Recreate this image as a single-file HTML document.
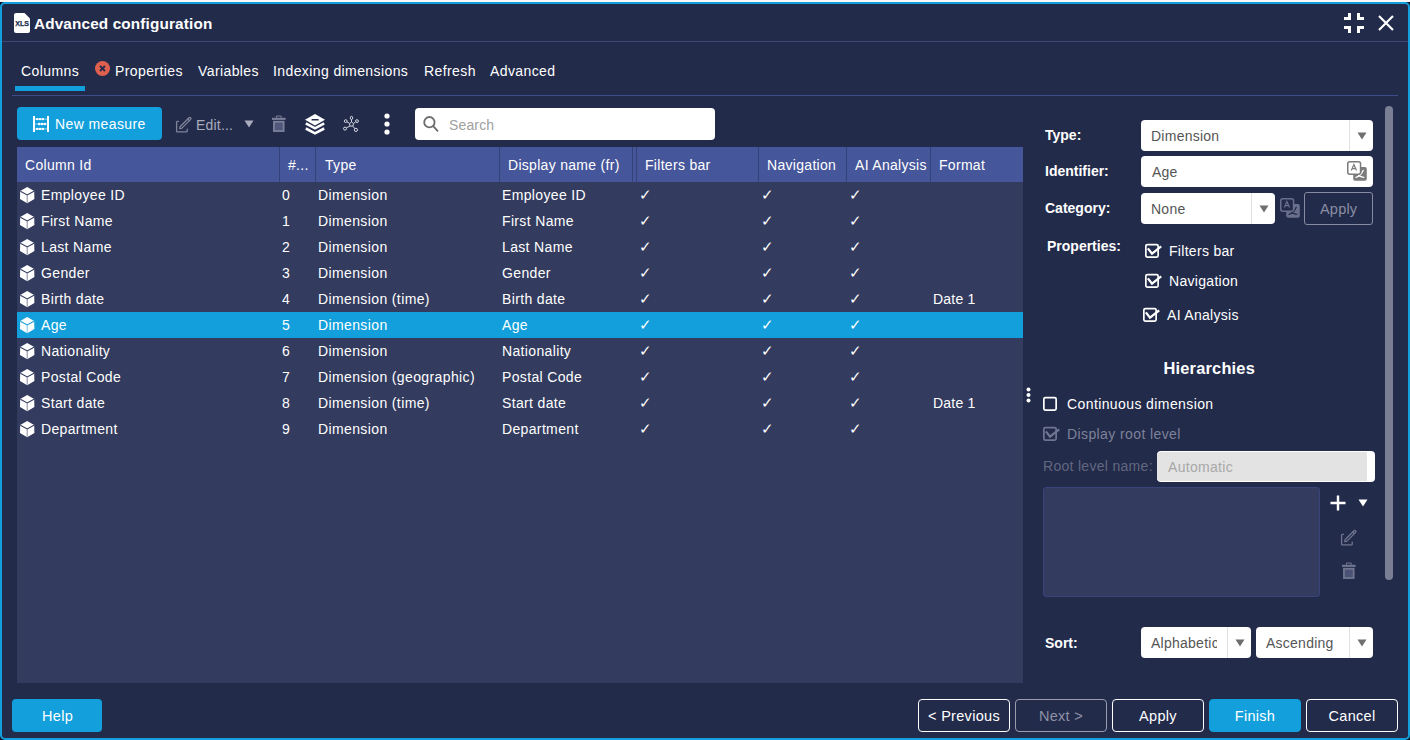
<!DOCTYPE html>
<html><head><meta charset="utf-8">
<style>
*{box-sizing:border-box;margin:0;padding:0}
html,body{width:1410px;height:740px;overflow:hidden;background:#0d1626;font-family:"Liberation Sans",sans-serif;color:#fff}
.abs{position:absolute}
.t{position:absolute;white-space:nowrap;line-height:1}
svg{position:absolute;overflow:visible}
</style></head>
<body>

<div class="abs" style="left:0;top:0;width:1410px;height:2px;background:#fbf8f6"></div>
<div class="abs" style="left:0;top:2px;width:1410px;height:738px;background:#232b4b;border:2px solid #129fdb;border-radius:5px"></div>
<svg style="left:14px;top:13px" width="16" height="20" viewBox="0 0 16 20"><path d="M2 0H10.5L16 5.5V18A2 2 0 0 1 14 20H2A2 2 0 0 1 0 18V2A2 2 0 0 1 2 0Z" fill="#fff"/><text x="1.3" y="13.3" textLength="13.6" lengthAdjust="spacingAndGlyphs" font-family="Liberation Sans" font-weight="bold" font-size="6.8" fill="#232b4b" stroke="#232b4b" stroke-width="0.25">XLS</text></svg>
<div class="t" style="left:34px;top:16.05px;font-size:15.3px;color:#fff;font-weight:bold;letter-spacing:0.15px;">Advanced configuration</div>
<svg style="left:1344px;top:13px" width="20" height="20" viewBox="0 0 20 20" fill="#fff">
<rect x="4" y="0" width="3" height="7"/><rect x="0" y="4" width="7" height="3"/>
<rect x="13" y="0" width="3" height="7"/><rect x="13" y="4" width="7" height="3"/>
<rect x="0" y="13" width="7" height="3"/><rect x="4" y="13" width="3" height="7"/>
<rect x="13" y="13" width="7" height="3"/><rect x="13" y="13" width="3" height="7"/></svg>
<svg style="left:1378px;top:15px" width="16" height="16" viewBox="0 0 16 16"><path d="M1 1L15 15M15 1L1 15" stroke="#fff" stroke-width="2.2"/></svg>
<div class="abs" style="left:2px;top:41px;width:1406px;height:1px;background:#3b4677;"></div>
<div class="t" style="left:21px;top:64.15px;font-size:14px;color:#fff;font-weight:normal;letter-spacing:0.4px;">Columns</div>
<div class="t" style="left:115px;top:64.15px;font-size:14px;color:#fff;font-weight:normal;letter-spacing:0.4px;">Properties</div>
<div class="t" style="left:198px;top:64.15px;font-size:14px;color:#fff;font-weight:normal;letter-spacing:0.4px;">Variables</div>
<div class="t" style="left:273px;top:64.15px;font-size:14px;color:#fff;font-weight:normal;letter-spacing:0.4px;">Indexing dimensions</div>
<div class="t" style="left:424px;top:64.15px;font-size:14px;color:#fff;font-weight:normal;letter-spacing:0.4px;">Refresh</div>
<div class="t" style="left:490px;top:64.15px;font-size:14px;color:#fff;font-weight:normal;letter-spacing:0.4px;">Advanced</div>
<div class="abs" style="left:15px;top:86px;width:70px;height:5px;background:#129fdb;"></div>
<div class="abs" style="left:12px;top:95px;width:1386px;height:1px;background:#3e4c8a;"></div>
<svg style="left:95px;top:61px" width="15" height="15" viewBox="0 0 15 15"><circle cx="7.5" cy="7.5" r="7.5" fill="#e0604f"/><path d="M5 5L10 10M10 5L5 10" stroke="#232b4b" stroke-width="1.8"/></svg>
<div class="abs" style="left:17px;top:107px;width:145px;height:33px;background:#129fdb;border-radius:4px"></div>
<div class="t" style="left:55px;top:117.15px;font-size:14px;color:#fff;font-weight:normal;letter-spacing:0.4px;">New measure</div>
<svg style="left:33px;top:116px" width="16" height="16" viewBox="0 0 16 16" fill="#fff">
<rect x="0" y="0" width="2" height="16"/><rect x="14" y="0" width="2" height="16"/>
<rect x="2" y="2.7" width="12" height="0.8" opacity="0.7"/><rect x="2" y="7.6" width="12" height="0.8" opacity="0.7"/><rect x="2" y="12.5" width="12" height="0.8" opacity="0.7"/>
<ellipse cx="4.2" cy="3.1" rx="1.3" ry="1.2"/><ellipse cx="7" cy="3.1" rx="1.3" ry="1.2"/><ellipse cx="9.8" cy="3.1" rx="1.3" ry="1.2"/>
<ellipse cx="6.2" cy="8" rx="1.3" ry="1.2"/><ellipse cx="9" cy="8" rx="1.3" ry="1.2"/><ellipse cx="11.8" cy="8" rx="1.3" ry="1.2"/>
<ellipse cx="4.2" cy="12.9" rx="1.3" ry="1.2"/><ellipse cx="7" cy="12.9" rx="1.3" ry="1.2"/><ellipse cx="9.8" cy="12.9" rx="1.3" ry="1.2"/></svg>
<svg style="left:176px;top:116px" width="16" height="16" viewBox="0 0 16 16" fill="none" stroke="#7f8499" stroke-width="1.3" stroke-linecap="round" stroke-linejoin="round">
<path d="M2.5 5.3H1.3A0.8 0.8 0 0 0 0.6 6V15.2A0.8 0.8 0 0 0 1.3 15.9H10.5A0.8 0.8 0 0 0 11.2 15.2V13.2"/>
<path d="M5.6 12.4L3.8 12.6L4 10.8L11.8 3L13.4 4.6Z"/><path d="M11.8 3L13 1.8A1.1 1.1 0 0 1 14.6 3.4L13.4 4.6"/></svg>
<div class="t" style="left:196px;top:118.15px;font-size:14px;color:#a9acbd;font-weight:normal;letter-spacing:0.2px;">Edit...</div>
<svg style="left:244px;top:120px" width="10" height="8" viewBox="0 0 10 8"><path d="M0.5 0.5H9.5L5 7.5Z" fill="#aaadbd"/></svg>
<svg style="left:272px;top:116px" width="14" height="16" viewBox="0 0 14 16">
<rect x="0" y="1.8" width="13.6" height="2.1" fill="#7b8099"/><path d="M4.4 1.8V0.8A0.8 0.8 0 0 1 5.2 0H8.4A0.8 0.8 0 0 1 9.2 0.8V1.8" fill="none" stroke="#7b8099" stroke-width="1.1"/>
<rect x="1.95" y="5.75" width="9.7" height="9.3" fill="#4f577a" stroke="#7b8099" stroke-width="1.8"/></svg>
<svg style="left:305px;top:114px" width="20" height="21" viewBox="0 0 20 21"><path d="M10 0L20 5.7L10 11.4L0 5.7Z" fill="#fff"/><rect x="6.5" y="5" width="7.2" height="1.6" rx="0.5" fill="#232b4b"/><path d="M0.8 9.3L10 14.3L19.2 9.3M0.8 14.5L10 19.3L19.2 14.5" fill="none" stroke="#fff" stroke-width="2.6" stroke-linejoin="miter"/></svg>
<svg style="left:340px;top:114px" width="20" height="20" viewBox="0 0 20 20" fill="none" stroke="#d4d7e2" stroke-width="1">
<path d="M11.5 8L13.6 9.6L12.8 12.1H10.2L9.4 9.6Z"/>
<ellipse cx="11.5" cy="3.9" rx="1.2" ry="1.6"/><circle cx="5.7" cy="7.1" r="1.4"/><circle cx="17" cy="7.1" r="1.4"/><circle cx="5" cy="14.6" r="1.5"/><circle cx="15.9" cy="15.9" r="1.6"/>
<path d="M11.5 5.5V8M7 7.8L9.4 9.4M15.7 7.8L13.6 9.4M6.3 13.9L10 12M14.9 14.7L12.9 12.2"/></svg>
<svg style="left:384px;top:113px" width="6" height="22" viewBox="0 0 6 22" fill="#fff"><circle cx="3" cy="3" r="2.6"/><circle cx="3" cy="11" r="2.6"/><circle cx="3" cy="19" r="2.6"/></svg>
<div class="abs" style="left:415px;top:108px;width:300px;height:32px;background:#fff;border-radius:4px"></div>
<svg style="left:423px;top:116px" width="16" height="16" viewBox="0 0 16 16" fill="none" stroke="#6b6b6b" stroke-width="1.8"><circle cx="6.4" cy="6.2" r="5.2"/><path d="M10.2 10.2L15 15.3"/></svg>
<div class="t" style="left:449px;top:118.15px;font-size:14px;color:#a0a0a0;font-weight:normal;letter-spacing:0.15px;">Search</div>
<div class="abs" style="left:17px;top:147px;width:1006px;height:35px;background:#46569a;"></div>
<div class="abs" style="left:17px;top:182px;width:1006px;height:501px;background:#333b5e;"></div>
<div class="abs" style="left:279px;top:147px;width:1px;height:35px;background:#35427a;"></div>
<div class="abs" style="left:315px;top:147px;width:1px;height:35px;background:#35427a;"></div>
<div class="abs" style="left:499px;top:147px;width:1px;height:35px;background:#35427a;"></div>
<div class="abs" style="left:632px;top:147px;width:1px;height:35px;background:#35427a;"></div>
<div class="abs" style="left:636px;top:147px;width:1px;height:35px;background:#35427a;"></div>
<div class="abs" style="left:758px;top:147px;width:1px;height:35px;background:#35427a;"></div>
<div class="abs" style="left:846px;top:147px;width:1px;height:35px;background:#35427a;"></div>
<div class="abs" style="left:930px;top:147px;width:1px;height:35px;background:#35427a;"></div>
<div class="t" style="left:25px;top:158.15px;font-size:14px;color:#fff;font-weight:normal;letter-spacing:0.3px;">Column Id</div>
<div class="t" style="left:288px;top:158.15px;font-size:14px;color:#fff;font-weight:normal;letter-spacing:0.3px;">#...</div>
<div class="t" style="left:325px;top:158.15px;font-size:14px;color:#fff;font-weight:normal;letter-spacing:0.3px;">Type</div>
<div class="t" style="left:508px;top:158.15px;font-size:14px;color:#fff;font-weight:normal;letter-spacing:0.3px;">Display name (fr)</div>
<div class="t" style="left:645px;top:158.15px;font-size:14px;color:#fff;font-weight:normal;letter-spacing:0.3px;">Filters bar</div>
<div class="t" style="left:767px;top:158.15px;font-size:14px;color:#fff;font-weight:normal;letter-spacing:0.3px;">Navigation</div>
<div class="t" style="left:855px;top:158.15px;font-size:14px;color:#fff;font-weight:normal;letter-spacing:0.3px;">AI Analysis</div>
<div class="t" style="left:939px;top:158.15px;font-size:14px;color:#fff;font-weight:normal;letter-spacing:0.3px;">Format</div>
<svg style="left:19.8px;top:186.7px" width="14.4" height="16.2" viewBox="0 0 14.4 16.2"><path d="M7.2 0L14.2 3.9L14.4 12.1L7.2 16.2L0 12.1L0.2 3.9Z" fill="#fff"/><path d="M0.4 4.3L7.2 7.9L14 4.3" stroke="#333b5e" stroke-width="1.1" fill="none"/><path d="M7.2 8.3V15.8" stroke="#333b5e" stroke-width="1.1" opacity="0.55" fill="none"/></svg>
<div class="t" style="left:41px;top:188.15px;font-size:14px;color:#fff;font-weight:normal;letter-spacing:0.35px;">Employee ID</div>
<div class="t" style="left:282px;top:188.15px;font-size:14px;color:#fff;font-weight:normal;letter-spacing:0.2px;">0</div>
<div class="t" style="left:318px;top:188.15px;font-size:14px;color:#fff;font-weight:normal;letter-spacing:0.38px;">Dimension</div>
<div class="t" style="left:502px;top:188.15px;font-size:14px;color:#fff;font-weight:normal;letter-spacing:0.35px;">Employee ID</div>
<div class="t" style="left:639px;top:187.97px;font-size:14.8px;color:#fff;font-weight:normal;letter-spacing:0px;">&#10003;</div>
<div class="t" style="left:761px;top:187.97px;font-size:14.8px;color:#fff;font-weight:normal;letter-spacing:0px;">&#10003;</div>
<div class="t" style="left:849px;top:187.97px;font-size:14.8px;color:#fff;font-weight:normal;letter-spacing:0px;">&#10003;</div>
<svg style="left:19.8px;top:212.7px" width="14.4" height="16.2" viewBox="0 0 14.4 16.2"><path d="M7.2 0L14.2 3.9L14.4 12.1L7.2 16.2L0 12.1L0.2 3.9Z" fill="#fff"/><path d="M0.4 4.3L7.2 7.9L14 4.3" stroke="#333b5e" stroke-width="1.1" fill="none"/><path d="M7.2 8.3V15.8" stroke="#333b5e" stroke-width="1.1" opacity="0.55" fill="none"/></svg>
<div class="t" style="left:41px;top:214.15px;font-size:14px;color:#fff;font-weight:normal;letter-spacing:0.35px;">First Name</div>
<div class="t" style="left:282px;top:214.15px;font-size:14px;color:#fff;font-weight:normal;letter-spacing:0.2px;">1</div>
<div class="t" style="left:318px;top:214.15px;font-size:14px;color:#fff;font-weight:normal;letter-spacing:0.38px;">Dimension</div>
<div class="t" style="left:502px;top:214.15px;font-size:14px;color:#fff;font-weight:normal;letter-spacing:0.35px;">First Name</div>
<div class="t" style="left:639px;top:213.97px;font-size:14.8px;color:#fff;font-weight:normal;letter-spacing:0px;">&#10003;</div>
<div class="t" style="left:761px;top:213.97px;font-size:14.8px;color:#fff;font-weight:normal;letter-spacing:0px;">&#10003;</div>
<div class="t" style="left:849px;top:213.97px;font-size:14.8px;color:#fff;font-weight:normal;letter-spacing:0px;">&#10003;</div>
<svg style="left:19.8px;top:238.7px" width="14.4" height="16.2" viewBox="0 0 14.4 16.2"><path d="M7.2 0L14.2 3.9L14.4 12.1L7.2 16.2L0 12.1L0.2 3.9Z" fill="#fff"/><path d="M0.4 4.3L7.2 7.9L14 4.3" stroke="#333b5e" stroke-width="1.1" fill="none"/><path d="M7.2 8.3V15.8" stroke="#333b5e" stroke-width="1.1" opacity="0.55" fill="none"/></svg>
<div class="t" style="left:41px;top:240.15px;font-size:14px;color:#fff;font-weight:normal;letter-spacing:0.35px;">Last Name</div>
<div class="t" style="left:282px;top:240.15px;font-size:14px;color:#fff;font-weight:normal;letter-spacing:0.2px;">2</div>
<div class="t" style="left:318px;top:240.15px;font-size:14px;color:#fff;font-weight:normal;letter-spacing:0.38px;">Dimension</div>
<div class="t" style="left:502px;top:240.15px;font-size:14px;color:#fff;font-weight:normal;letter-spacing:0.35px;">Last Name</div>
<div class="t" style="left:639px;top:239.97px;font-size:14.8px;color:#fff;font-weight:normal;letter-spacing:0px;">&#10003;</div>
<div class="t" style="left:761px;top:239.97px;font-size:14.8px;color:#fff;font-weight:normal;letter-spacing:0px;">&#10003;</div>
<div class="t" style="left:849px;top:239.97px;font-size:14.8px;color:#fff;font-weight:normal;letter-spacing:0px;">&#10003;</div>
<svg style="left:19.8px;top:264.7px" width="14.4" height="16.2" viewBox="0 0 14.4 16.2"><path d="M7.2 0L14.2 3.9L14.4 12.1L7.2 16.2L0 12.1L0.2 3.9Z" fill="#fff"/><path d="M0.4 4.3L7.2 7.9L14 4.3" stroke="#333b5e" stroke-width="1.1" fill="none"/><path d="M7.2 8.3V15.8" stroke="#333b5e" stroke-width="1.1" opacity="0.55" fill="none"/></svg>
<div class="t" style="left:41px;top:266.15px;font-size:14px;color:#fff;font-weight:normal;letter-spacing:0.35px;">Gender</div>
<div class="t" style="left:282px;top:266.15px;font-size:14px;color:#fff;font-weight:normal;letter-spacing:0.2px;">3</div>
<div class="t" style="left:318px;top:266.15px;font-size:14px;color:#fff;font-weight:normal;letter-spacing:0.38px;">Dimension</div>
<div class="t" style="left:502px;top:266.15px;font-size:14px;color:#fff;font-weight:normal;letter-spacing:0.35px;">Gender</div>
<div class="t" style="left:639px;top:265.97px;font-size:14.8px;color:#fff;font-weight:normal;letter-spacing:0px;">&#10003;</div>
<div class="t" style="left:761px;top:265.97px;font-size:14.8px;color:#fff;font-weight:normal;letter-spacing:0px;">&#10003;</div>
<div class="t" style="left:849px;top:265.97px;font-size:14.8px;color:#fff;font-weight:normal;letter-spacing:0px;">&#10003;</div>
<svg style="left:19.8px;top:290.7px" width="14.4" height="16.2" viewBox="0 0 14.4 16.2"><path d="M7.2 0L14.2 3.9L14.4 12.1L7.2 16.2L0 12.1L0.2 3.9Z" fill="#fff"/><path d="M0.4 4.3L7.2 7.9L14 4.3" stroke="#333b5e" stroke-width="1.1" fill="none"/><path d="M7.2 8.3V15.8" stroke="#333b5e" stroke-width="1.1" opacity="0.55" fill="none"/></svg>
<div class="t" style="left:41px;top:292.15px;font-size:14px;color:#fff;font-weight:normal;letter-spacing:0.35px;">Birth date</div>
<div class="t" style="left:282px;top:292.15px;font-size:14px;color:#fff;font-weight:normal;letter-spacing:0.2px;">4</div>
<div class="t" style="left:318px;top:292.15px;font-size:14px;color:#fff;font-weight:normal;letter-spacing:0.38px;">Dimension (time)</div>
<div class="t" style="left:502px;top:292.15px;font-size:14px;color:#fff;font-weight:normal;letter-spacing:0.35px;">Birth date</div>
<div class="t" style="left:639px;top:291.97px;font-size:14.8px;color:#fff;font-weight:normal;letter-spacing:0px;">&#10003;</div>
<div class="t" style="left:761px;top:291.97px;font-size:14.8px;color:#fff;font-weight:normal;letter-spacing:0px;">&#10003;</div>
<div class="t" style="left:849px;top:291.97px;font-size:14.8px;color:#fff;font-weight:normal;letter-spacing:0px;">&#10003;</div>
<div class="t" style="left:933px;top:292.15px;font-size:14px;color:#fff;font-weight:normal;letter-spacing:0.2px;">Date 1</div>
<div class="abs" style="left:17px;top:312px;width:1006px;height:26px;background:#129fdb;"></div>
<svg style="left:19.8px;top:316.7px" width="14.4" height="16.2" viewBox="0 0 14.4 16.2"><path d="M7.2 0L14.2 3.9L14.4 12.1L7.2 16.2L0 12.1L0.2 3.9Z" fill="#fff"/><path d="M0.4 4.3L7.2 7.9L14 4.3" stroke="#129fdb" stroke-width="1.1" fill="none"/><path d="M7.2 8.3V15.8" stroke="#129fdb" stroke-width="1.1" opacity="0.55" fill="none"/></svg>
<div class="t" style="left:41px;top:318.15px;font-size:14px;color:#fff;font-weight:normal;letter-spacing:0.35px;">Age</div>
<div class="t" style="left:282px;top:318.15px;font-size:14px;color:#fff;font-weight:normal;letter-spacing:0.2px;">5</div>
<div class="t" style="left:318px;top:318.15px;font-size:14px;color:#fff;font-weight:normal;letter-spacing:0.38px;">Dimension</div>
<div class="t" style="left:502px;top:318.15px;font-size:14px;color:#fff;font-weight:normal;letter-spacing:0.35px;">Age</div>
<div class="t" style="left:639px;top:317.97px;font-size:14.8px;color:#fff;font-weight:normal;letter-spacing:0px;">&#10003;</div>
<div class="t" style="left:761px;top:317.97px;font-size:14.8px;color:#fff;font-weight:normal;letter-spacing:0px;">&#10003;</div>
<div class="t" style="left:849px;top:317.97px;font-size:14.8px;color:#fff;font-weight:normal;letter-spacing:0px;">&#10003;</div>
<svg style="left:19.8px;top:342.7px" width="14.4" height="16.2" viewBox="0 0 14.4 16.2"><path d="M7.2 0L14.2 3.9L14.4 12.1L7.2 16.2L0 12.1L0.2 3.9Z" fill="#fff"/><path d="M0.4 4.3L7.2 7.9L14 4.3" stroke="#333b5e" stroke-width="1.1" fill="none"/><path d="M7.2 8.3V15.8" stroke="#333b5e" stroke-width="1.1" opacity="0.55" fill="none"/></svg>
<div class="t" style="left:41px;top:344.15px;font-size:14px;color:#fff;font-weight:normal;letter-spacing:0.35px;">Nationality</div>
<div class="t" style="left:282px;top:344.15px;font-size:14px;color:#fff;font-weight:normal;letter-spacing:0.2px;">6</div>
<div class="t" style="left:318px;top:344.15px;font-size:14px;color:#fff;font-weight:normal;letter-spacing:0.38px;">Dimension</div>
<div class="t" style="left:502px;top:344.15px;font-size:14px;color:#fff;font-weight:normal;letter-spacing:0.35px;">Nationality</div>
<div class="t" style="left:639px;top:343.97px;font-size:14.8px;color:#fff;font-weight:normal;letter-spacing:0px;">&#10003;</div>
<div class="t" style="left:761px;top:343.97px;font-size:14.8px;color:#fff;font-weight:normal;letter-spacing:0px;">&#10003;</div>
<div class="t" style="left:849px;top:343.97px;font-size:14.8px;color:#fff;font-weight:normal;letter-spacing:0px;">&#10003;</div>
<svg style="left:19.8px;top:368.7px" width="14.4" height="16.2" viewBox="0 0 14.4 16.2"><path d="M7.2 0L14.2 3.9L14.4 12.1L7.2 16.2L0 12.1L0.2 3.9Z" fill="#fff"/><path d="M0.4 4.3L7.2 7.9L14 4.3" stroke="#333b5e" stroke-width="1.1" fill="none"/><path d="M7.2 8.3V15.8" stroke="#333b5e" stroke-width="1.1" opacity="0.55" fill="none"/></svg>
<div class="t" style="left:41px;top:370.15px;font-size:14px;color:#fff;font-weight:normal;letter-spacing:0.35px;">Postal Code</div>
<div class="t" style="left:282px;top:370.15px;font-size:14px;color:#fff;font-weight:normal;letter-spacing:0.2px;">7</div>
<div class="t" style="left:318px;top:370.15px;font-size:14px;color:#fff;font-weight:normal;letter-spacing:0.38px;">Dimension (geographic)</div>
<div class="t" style="left:502px;top:370.15px;font-size:14px;color:#fff;font-weight:normal;letter-spacing:0.35px;">Postal Code</div>
<div class="t" style="left:639px;top:369.97px;font-size:14.8px;color:#fff;font-weight:normal;letter-spacing:0px;">&#10003;</div>
<div class="t" style="left:761px;top:369.97px;font-size:14.8px;color:#fff;font-weight:normal;letter-spacing:0px;">&#10003;</div>
<div class="t" style="left:849px;top:369.97px;font-size:14.8px;color:#fff;font-weight:normal;letter-spacing:0px;">&#10003;</div>
<svg style="left:19.8px;top:394.7px" width="14.4" height="16.2" viewBox="0 0 14.4 16.2"><path d="M7.2 0L14.2 3.9L14.4 12.1L7.2 16.2L0 12.1L0.2 3.9Z" fill="#fff"/><path d="M0.4 4.3L7.2 7.9L14 4.3" stroke="#333b5e" stroke-width="1.1" fill="none"/><path d="M7.2 8.3V15.8" stroke="#333b5e" stroke-width="1.1" opacity="0.55" fill="none"/></svg>
<div class="t" style="left:41px;top:396.15px;font-size:14px;color:#fff;font-weight:normal;letter-spacing:0.35px;">Start date</div>
<div class="t" style="left:282px;top:396.15px;font-size:14px;color:#fff;font-weight:normal;letter-spacing:0.2px;">8</div>
<div class="t" style="left:318px;top:396.15px;font-size:14px;color:#fff;font-weight:normal;letter-spacing:0.38px;">Dimension (time)</div>
<div class="t" style="left:502px;top:396.15px;font-size:14px;color:#fff;font-weight:normal;letter-spacing:0.35px;">Start date</div>
<div class="t" style="left:639px;top:395.97px;font-size:14.8px;color:#fff;font-weight:normal;letter-spacing:0px;">&#10003;</div>
<div class="t" style="left:761px;top:395.97px;font-size:14.8px;color:#fff;font-weight:normal;letter-spacing:0px;">&#10003;</div>
<div class="t" style="left:849px;top:395.97px;font-size:14.8px;color:#fff;font-weight:normal;letter-spacing:0px;">&#10003;</div>
<div class="t" style="left:933px;top:396.15px;font-size:14px;color:#fff;font-weight:normal;letter-spacing:0.2px;">Date 1</div>
<svg style="left:19.8px;top:420.7px" width="14.4" height="16.2" viewBox="0 0 14.4 16.2"><path d="M7.2 0L14.2 3.9L14.4 12.1L7.2 16.2L0 12.1L0.2 3.9Z" fill="#fff"/><path d="M0.4 4.3L7.2 7.9L14 4.3" stroke="#333b5e" stroke-width="1.1" fill="none"/><path d="M7.2 8.3V15.8" stroke="#333b5e" stroke-width="1.1" opacity="0.55" fill="none"/></svg>
<div class="t" style="left:41px;top:422.15px;font-size:14px;color:#fff;font-weight:normal;letter-spacing:0.35px;">Department</div>
<div class="t" style="left:282px;top:422.15px;font-size:14px;color:#fff;font-weight:normal;letter-spacing:0.2px;">9</div>
<div class="t" style="left:318px;top:422.15px;font-size:14px;color:#fff;font-weight:normal;letter-spacing:0.38px;">Dimension</div>
<div class="t" style="left:502px;top:422.15px;font-size:14px;color:#fff;font-weight:normal;letter-spacing:0.35px;">Department</div>
<div class="t" style="left:639px;top:421.97px;font-size:14.8px;color:#fff;font-weight:normal;letter-spacing:0px;">&#10003;</div>
<div class="t" style="left:761px;top:421.97px;font-size:14.8px;color:#fff;font-weight:normal;letter-spacing:0px;">&#10003;</div>
<div class="t" style="left:849px;top:421.97px;font-size:14.8px;color:#fff;font-weight:normal;letter-spacing:0px;">&#10003;</div>
<div class="abs" style="left:1385px;top:106px;width:8px;height:474px;background:#7a7f96;border-radius:4px"></div>
<div class="t" style="left:1045px;top:128.15px;font-size:14px;color:#fff;font-weight:bold;letter-spacing:0px;">Type:</div>
<div class="t" style="left:1045px;top:164.15px;font-size:14px;color:#fff;font-weight:bold;letter-spacing:0px;">Identifier:</div>
<div class="t" style="left:1045px;top:201.15px;font-size:14px;color:#fff;font-weight:bold;letter-spacing:0px;">Category:</div>
<div class="t" style="left:1047px;top:239.15px;font-size:14px;color:#fff;font-weight:bold;letter-spacing:0px;">Properties:</div>
<div class="abs" style="left:1141px;top:120px;width:232px;height:31px;background:#fff;border-radius:4px"></div>
<div class="abs" style="left:1349px;top:120px;width:1px;height:31px;background:#e2e2e2;"></div>
<svg style="left:1357px;top:132px" width="10" height="8" viewBox="0 0 10 8"><path d="M0.5 0.5H9.5L5 7.5Z" fill="#6f6f6f"/></svg>
<div class="t" style="left:1151px;top:129.15px;font-size:14px;color:#555;font-weight:normal;letter-spacing:0.25px;">Dimension</div>
<div class="abs" style="left:1141px;top:156px;width:232px;height:31px;background:#fff;border-radius:4px"></div>
<div class="t" style="left:1152px;top:165.15px;font-size:14px;color:#555;font-weight:normal;letter-spacing:0.25px;">Age</div>
<svg style="left:1347px;top:161px" width="20" height="20" viewBox="0 0 20 20">
<rect x="6.2" y="6.1" width="13.6" height="13.6" rx="2" fill="#7b7b7b"/>
<path d="M9 16.3C12 15.6 14.6 13.2 16.2 9.3M10.9 13.2C12.2 15.2 14.2 16.1 16.8 16.3" stroke="#fff" stroke-width="1.3" fill="none" stroke-linecap="round"/>
<rect x="0.75" y="0.75" width="12.8" height="12.6" rx="2" fill="#fff" stroke="#7b7b7b" stroke-width="1.5"/>
<path d="M4.3 9.6L6.9 3.5L9.5 9.6M5.2 7.6H8.6" stroke="#7b7b7b" stroke-width="1.2" fill="none"/></svg>
<div class="abs" style="left:1141px;top:193px;width:134px;height:31px;background:#fff;border-radius:4px"></div>
<div class="abs" style="left:1251px;top:193px;width:1px;height:31px;background:#e2e2e2;"></div>
<svg style="left:1259px;top:205px" width="10" height="8" viewBox="0 0 10 8"><path d="M0.5 0.5H9.5L5 7.5Z" fill="#6f6f6f"/></svg>
<div class="t" style="left:1151px;top:202.15px;font-size:14px;color:#555;font-weight:normal;letter-spacing:0.25px;">None</div>
<svg style="left:1280px;top:198px" width="20" height="20" viewBox="0 0 20 20">
<rect x="6.2" y="6.1" width="13.6" height="13.6" rx="2" fill="#6a708c"/>
<path d="M9 16.3C12 15.6 14.6 13.2 16.2 9.3M10.9 13.2C12.2 15.2 14.2 16.1 16.8 16.3" stroke="#232b4b" stroke-width="1.3" fill="none" stroke-linecap="round"/>
<rect x="0.75" y="0.75" width="12.8" height="12.6" rx="2" fill="#232b4b" stroke="#6a708c" stroke-width="1.5"/>
<path d="M4.3 9.6L6.9 3.5L9.5 9.6M5.2 7.6H8.6" stroke="#6a708c" stroke-width="1.2" fill="none"/></svg>
<div class="abs" style="left:1304px;top:192px;width:69px;height:33px;border:1px solid #878ba1;border-radius:3px"></div>
<div class="t" style="left:1320px;top:201.73px;font-size:14.5px;color:#8a8ea3;font-weight:normal;letter-spacing:0.2px;">Apply</div>
<svg style="left:1145px;top:244px" width="17" height="14" viewBox="0 0 17 14"><rect x="0.85" y="0.6" width="12.3" height="12.5" rx="1.5" fill="none" stroke="#fff" stroke-width="1.7"/><path d="M2.9 4.4L7 9.6L16.2 2.4" stroke="#fff" stroke-width="2.3" fill="none"/></svg>
<div class="t" style="left:1169px;top:244.15px;font-size:14px;color:#fff;font-weight:normal;letter-spacing:0.3px;">Filters bar</div>
<svg style="left:1145px;top:274px" width="17" height="14" viewBox="0 0 17 14"><rect x="0.85" y="0.6" width="12.3" height="12.5" rx="1.5" fill="none" stroke="#fff" stroke-width="1.7"/><path d="M2.9 4.4L7 9.6L16.2 2.4" stroke="#fff" stroke-width="2.3" fill="none"/></svg>
<div class="t" style="left:1169px;top:274.15px;font-size:14px;color:#fff;font-weight:normal;letter-spacing:0.3px;">Navigation</div>
<svg style="left:1143px;top:308px" width="17" height="14" viewBox="0 0 17 14"><rect x="0.85" y="0.6" width="12.3" height="12.5" rx="1.5" fill="none" stroke="#fff" stroke-width="1.7"/><path d="M2.9 4.4L7 9.6L16.2 2.4" stroke="#fff" stroke-width="2.3" fill="none"/></svg>
<div class="t" style="left:1167px;top:308.15px;font-size:14px;color:#fff;font-weight:normal;letter-spacing:0.3px;">AI Analysis</div>
<div class="t" style="left:1163.5px;top:360.12px;font-size:16.4px;color:#fff;font-weight:bold;letter-spacing:0.2px;">Hierarchies</div>
<svg style="left:1026px;top:387px" width="5" height="16" viewBox="0 0 5 16" fill="#fff"><circle cx="2.5" cy="2.5" r="2"/><circle cx="2.5" cy="8" r="2"/><circle cx="2.5" cy="13.5" r="2"/></svg>
<svg style="left:1043px;top:397px" width="17" height="14" viewBox="0 0 17 14"><rect x="0.85" y="0.6" width="12.3" height="12.5" rx="1.5" fill="none" stroke="#fff" stroke-width="1.7"/></svg>
<div class="t" style="left:1067px;top:397.15px;font-size:14px;color:#fff;font-weight:normal;letter-spacing:0.4px;">Continuous dimension</div>
<svg style="left:1043px;top:427px" width="17" height="14" viewBox="0 0 17 14"><rect x="0.85" y="0.6" width="12.3" height="12.5" rx="1.5" fill="none" stroke="#6f7590" stroke-width="1.7"/><path d="M2.9 4.4L7 9.6L16.2 2.4" stroke="#6f7590" stroke-width="2.3" fill="none"/></svg>
<div class="t" style="left:1067px;top:427.15px;font-size:14px;color:#7d8299;font-weight:normal;letter-spacing:0.4px;">Display root level</div>
<div class="t" style="left:1043px;top:459.15px;font-size:14px;color:#62677f;font-weight:normal;letter-spacing:0.3px;">Root level name:</div>
<div class="abs" style="left:1157px;top:451px;width:218px;height:31px;background:#fff;border-radius:4px"></div>
<div class="abs" style="left:1157px;top:452px;width:210px;height:29px;background:#e3e3e3;border-radius:4px 0 0 4px"></div>
<div class="t" style="left:1168px;top:460.15px;font-size:14px;color:#a8a8a8;font-weight:normal;letter-spacing:0.3px;">Automatic</div>
<div class="abs" style="left:1043px;top:487px;width:277px;height:110px;background:#333b5e;border:1px solid #39447a;border-radius:3px"></div>
<svg style="left:1330px;top:495px" width="16" height="16" viewBox="0 0 16 16"><path d="M8 0.5V15.5M0.5 8H15.5" stroke="#fff" stroke-width="2.4"/></svg>
<svg style="left:1358px;top:499px" width="10" height="8" viewBox="0 0 10 8"><path d="M0.5 0.5H9.5L5 7.5Z" fill="#fff"/></svg>
<svg style="left:1341px;top:529px" width="16" height="16" viewBox="0 0 16 16" fill="none" stroke="#70768f" stroke-width="1.3" stroke-linecap="round" stroke-linejoin="round">
<path d="M2.5 5.3H1.3A0.8 0.8 0 0 0 0.6 6V15.2A0.8 0.8 0 0 0 1.3 15.9H10.5A0.8 0.8 0 0 0 11.2 15.2V13.2"/>
<path d="M5.6 12.4L3.8 12.6L4 10.8L11.8 3L13.4 4.6Z"/><path d="M11.8 3L13 1.8A1.1 1.1 0 0 1 14.6 3.4L13.4 4.6"/></svg>
<svg style="left:1342px;top:563px" width="14" height="16" viewBox="0 0 14 16">
<rect x="0" y="1.8" width="13.6" height="2.1" fill="#70768f"/><path d="M4.4 1.8V0.8A0.8 0.8 0 0 1 5.2 0H8.4A0.8 0.8 0 0 1 9.2 0.8V1.8" fill="none" stroke="#70768f" stroke-width="1.1"/>
<rect x="1.95" y="5.75" width="9.7" height="9.3" fill="#4a5276" stroke="#70768f" stroke-width="1.8"/></svg>
<div class="t" style="left:1045px;top:636.15px;font-size:14px;color:#fff;font-weight:bold;letter-spacing:0px;">Sort:</div>
<div class="abs" style="left:1141px;top:627px;width:110px;height:31px;background:#fff;border-radius:4px"></div>
<div class="abs" style="left:1227px;top:627px;width:1px;height:31px;background:#e2e2e2;"></div>
<svg style="left:1235px;top:639px" width="10" height="8" viewBox="0 0 10 8"><path d="M0.5 0.5H9.5L5 7.5Z" fill="#6f6f6f"/></svg>
<div class="abs" style="left:1151px;top:630px;width:66px;height:26px;overflow:hidden">
<div class="t" style="left:0px;top:6.15px;font-size:14px;color:#555;font-weight:normal;letter-spacing:0.25px;">Alphabetical</div>
</div>
<div class="abs" style="left:1256px;top:627px;width:117px;height:31px;background:#fff;border-radius:4px"></div>
<div class="abs" style="left:1349px;top:627px;width:1px;height:31px;background:#e2e2e2;"></div>
<svg style="left:1357px;top:639px" width="10" height="8" viewBox="0 0 10 8"><path d="M0.5 0.5H9.5L5 7.5Z" fill="#6f6f6f"/></svg>
<div class="t" style="left:1266px;top:636.15px;font-size:14px;color:#555;font-weight:normal;letter-spacing:0.25px;">Ascending</div>
<div class="abs" style="left:12px;top:699px;width:90px;height:33px;background:#129fdb;border-radius:4px"></div>
<div class="t" style="left:42px;top:708.73px;font-size:14.5px;color:#fff;font-weight:normal;letter-spacing:0.3px;">Help</div>
<div class="abs" style="left:918px;top:699px;width:92px;height:33px;border:1px solid #fff;border-radius:4px;"></div>
<div class="t" style="left:918px;top:708.73px;width:92px;text-align:center;font-size:14.5px;color:#fff;letter-spacing:0.3px">&lt; Previous</div>
<div class="abs" style="left:1015px;top:699px;width:92px;height:33px;border:1px solid #9a9db0;border-radius:4px;"></div>
<div class="t" style="left:1015px;top:708.73px;width:92px;text-align:center;font-size:14.5px;color:#8e92a6;letter-spacing:0.3px">Next &gt;</div>
<div class="abs" style="left:1112px;top:699px;width:92px;height:33px;border:1px solid #fff;border-radius:4px;"></div>
<div class="t" style="left:1112px;top:708.73px;width:92px;text-align:center;font-size:14.5px;color:#fff;letter-spacing:0.3px">Apply</div>
<div class="abs" style="left:1209px;top:699px;width:92px;height:33px;border:1px solid #129fdb;border-radius:4px;background:#129fdb;"></div>
<div class="t" style="left:1209px;top:708.73px;width:92px;text-align:center;font-size:14.5px;color:#fff;letter-spacing:0.3px">Finish</div>
<div class="abs" style="left:1306px;top:699px;width:92px;height:33px;border:1px solid #fff;border-radius:4px;"></div>
<div class="t" style="left:1306px;top:708.73px;width:92px;text-align:center;font-size:14.5px;color:#fff;letter-spacing:0.3px">Cancel</div>
</body></html>
